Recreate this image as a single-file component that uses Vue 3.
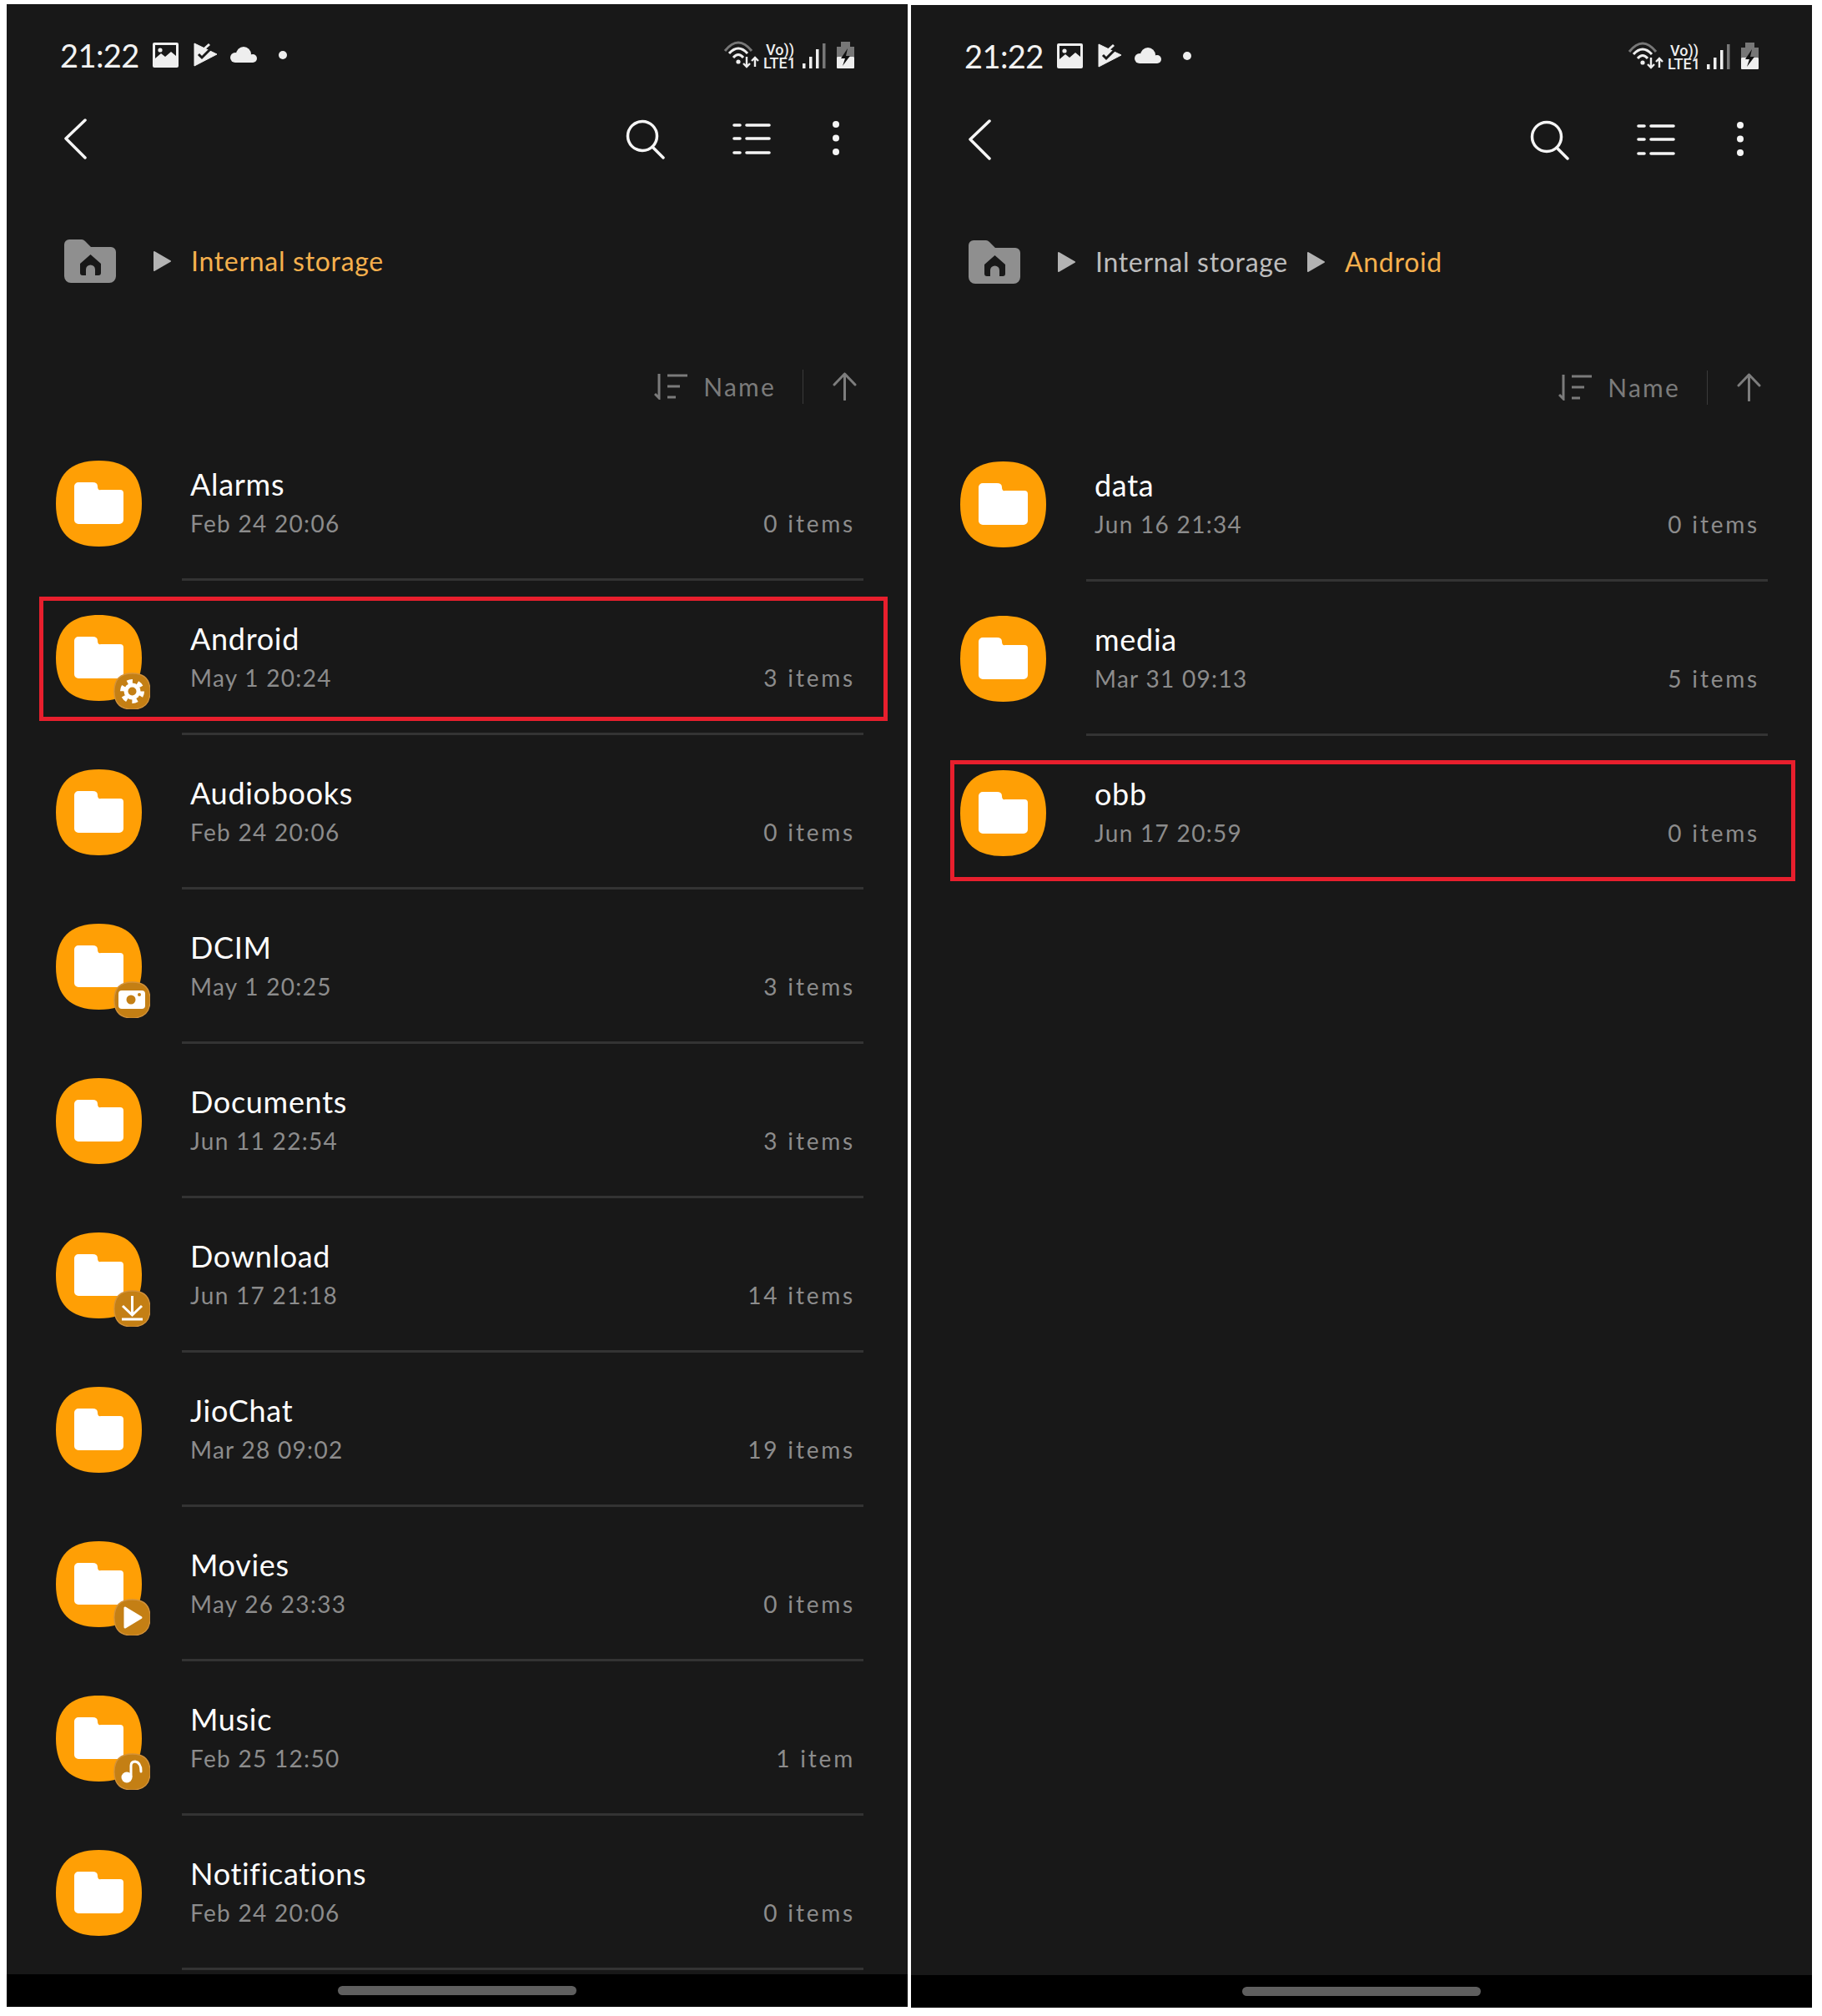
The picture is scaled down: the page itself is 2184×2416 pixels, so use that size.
<template>
  <div class="page">
    <section v-for="panel in panels" :key="panel.id" class="phone">
      <!-- Status bar -->
      <div class="status">
        <span class="status__time">21:22</span>
        <svg class="status__left" width="161" height="32" viewBox="0 0 161 32">
          <rect x="0" y="1" width="31" height="30" rx="2" fill="#eee" />
          <rect x="3" y="4" width="25" height="20" fill="#181818" />
          <circle cx="9" cy="10" r="2.6" fill="#eee" />
          <path d="M3 24v-4l7-6 5 4 7-6 6 5v7z" fill="#eee" />
          <path d="M50 2v27l27-14z" fill="#eee" stroke="#eee" stroke-width="1" stroke-linejoin="round" />
          <path d="M55 15l4 4 12-12" fill="none" stroke="#181818" stroke-width="3" />
          <path d="M59 11l9-8" fill="none" stroke="#eee" stroke-width="3" />
          <circle cx="99" cy="19" r="6" fill="#eee" />
          <circle cx="109" cy="15" r="9" fill="#eee" />
          <circle cx="120" cy="20" r="5" fill="#eee" />
          <rect x="99" y="19" width="21" height="6" fill="#eee" />
          <circle cx="156" cy="16" r="5" fill="#eee" />
        </svg>
        <svg class="status__right" width="157" height="46" viewBox="0 -6 157 46">
          <path d="M2 12Q18-8 34 12" fill="none" stroke="#777" stroke-width="3" />
          <path d="M7 15Q18 3 29 15" fill="none" stroke="#eee" stroke-width="3" />
          <path d="M12 20Q18 13 24 20" fill="none" stroke="#eee" stroke-width="3" />
          <circle cx="18" cy="25" r="2.6" fill="#eee" />
          <path d="M28 19v12M24 27l4 4 4-4M38 31V21M34 24l4-4 4 4" fill="none" stroke="#eee" stroke-width="2.4" />
          <text x="51" y="17" class="status__net">Vo))</text>
          <text x="48" y="33" class="status__net">LTE1</text>
          <rect x="95" y="27" width="3.5" height="6" fill="#eee" />
          <rect x="103" y="19" width="3.5" height="14" fill="#eee" />
          <rect x="111" y="10" width="3.5" height="23" fill="#eee" />
          <rect x="119" y="3" width="3.5" height="30" fill="#777" />
          <path d="M141 1h11v6h5v12h-21V7h5z" fill="#777" />
          <rect x="136" y="19" width="21" height="14" rx="1" fill="#eee" />
          <path d="M149 9l-8 12h5l-3 9 9-12h-5z" fill="#111" />
        </svg>
      </div>

      <!-- Toolbar -->
      <div class="toolbar">
        <svg class="toolbar__back" width="30" height="50" viewBox="0 0 30 50">
          <path d="M27 3L4 25l23 23" fill="none" stroke="#f5f5f5" stroke-width="3.5" stroke-linecap="round" stroke-linejoin="round" />
        </svg>
        <svg class="toolbar__search" width="48" height="48" viewBox="0 0 48 48">
          <circle cx="20" cy="20" r="17.5" fill="none" stroke="#f5f5f5" stroke-width="3.5" />
          <path d="M32 33l13 13" stroke="#f5f5f5" stroke-width="3.5" stroke-linecap="round" />
        </svg>
        <svg class="toolbar__list" width="48" height="40" viewBox="0 0 48 40">
          <path d="M3 4h7M3 20h7M3 37h7M18 4h27M18 20h27M18 37h27" stroke="#f5f5f5" stroke-width="3.6" stroke-linecap="round" />
        </svg>
        <svg class="toolbar__more" width="12" height="44" viewBox="0 0 12 44">
          <circle cx="6" cy="5" r="4" fill="#f5f5f5" />
          <circle cx="6" cy="21.500" r="4" fill="#f5f5f5" />
          <circle cx="6" cy="38" r="4" fill="#f5f5f5" />
        </svg>
      </div>

      <!-- Breadcrumb -->
      <div class="crumbs">
        <svg class="crumbs__home" width="62" height="52" viewBox="0 0 62 52">
          <path d="M6 0h15q2 0 4 2l7 7h24a6 6 0 0 1 6 6v29a8 8 0 0 1-8 8H8a8 8 0 0 1-8-8V6a6 6 0 0 1 6-6z" fill="#8f8f8f" />
          <path d="M31.500 18L44 29v11a3 3 0 0 1-3 3h-4v-7a5.500 5.500 0 0 0-11 0v7h-4a3 3 0 0 1-3-3V29z" fill="#181818" />
        </svg>
        <template v-for="(crumb, index) in panel.crumbs" :key="crumb">
          <svg class="crumbs__arrow" width="23" height="26" viewBox="0 0 23 26">
            <path d="M2 2l19 11L2 24z" fill="#b3b3b3" stroke="#b3b3b3" stroke-width="2" stroke-linejoin="round" />
          </svg>
          <span class="crumbs__label" :class="{ 'crumbs__label--active': index === panel.crumbs.length - 1 }">{{ crumb }}</span>
        </template>
      </div>

      <!-- Sort -->
      <div class="sort">
        <svg width="41" height="32" viewBox="0 0 41 32">
          <path d="M6 1v29L1 25M16 3h24M16 16h15M16 29h10" fill="none" stroke="#7b7b7b" stroke-width="3" />
        </svg>
        <span class="sort__label">Name</span>
        <span class="sort__divider"></span>
        <svg width="29" height="34" viewBox="0 0 29 34">
          <path d="M14.500 33V2M2 15L14.500 2 27 15" fill="none" stroke="#7d7d7d" stroke-width="3" stroke-linecap="round" stroke-linejoin="round" />
        </svg>
      </div>

      <!-- Folders -->
      <ul class="list">
        <li v-for="folder in panel.folders" :key="folder.name" class="row">
          <div v-if="folder.marked" class="row__mark" :class="'row__mark--' + panel.id"></div>
          <svg class="row__icon" width="113" height="113" viewBox="0 0 113 113">
            <path :d="squircle" fill="#ff9f05" />
            <path d="M27 26h17q6 0 6 5t4 4h23a4 4 0 0 1 4 4v32a5 5 0 0 1-5 5H27a5 5 0 0 1-5-5V31a5 5 0 0 1 5-5z" fill="#fff" />
            <g v-if="folder.badge">
              <path :d="squircle" transform="translate(70 70) scale(.4175)" fill="#c47f14" stroke="#d3923a" stroke-width="3" />
              <g v-if="folder.badge === 'gear'">
                <circle cx="91.500" cy="91.500" r="10" fill="#fff" />
                <circle cx="91.500" cy="91.500" r="12" fill="none" stroke="#fff" stroke-width="5" stroke-dasharray="6.300 6.270" />
                <circle cx="91.500" cy="91.500" r="5" fill="#c47f14" />
              </g>
              <g v-else-if="folder.badge === 'camera'">
                <rect x="75" y="80" width="32" height="22" rx="4" fill="#fff" />
                <circle cx="90" cy="91" r="5.500" fill="#c47f14" />
                <circle cx="100" cy="85" r="2" fill="#c47f14" />
              </g>
              <path v-else-if="folder.badge === 'download'" d="M91.500 76v22M80 88l11.500 11L103 88M79 104h25" fill="none" stroke="#fff" stroke-width="3" />
              <path v-else-if="folder.badge === 'play'" d="M83 80v23l19-11.500z" fill="#fff" stroke="#fff" stroke-width="3" stroke-linejoin="round" />
              <g v-else-if="folder.badge === 'music'">
                <circle cx="85" cy="98" r="6.500" fill="#fff" />
                <path d="M90 97V84q0-5 5-5 7 1 7 12" fill="none" stroke="#fff" stroke-width="3" stroke-linecap="round" />
              </g>
            </g>
          </svg>
          <div class="row__body" :class="{ 'row__body--end': folder.end }">
            <div class="row__name">{{ folder.name }}</div>
            <div class="row__meta">
              <span>{{ folder.date }}</span>
              <span class="row__count">{{ folder.count }}</span>
            </div>
          </div>
        </li>
      </ul>

      <!-- Navigation bar -->
      <div class="nav"><span class="nav__pill"></span></div>
    </section>
  </div>
</template>

<script setup>
const squircle =
  "M51.5 0C86 0 103 17 103 51.5 103 86 86 103 51.5 103 17 103 0 86 0 51.5 0 17 17 0 51.5 0z";

const panels = [
  {
    id: "root",
    crumbs: ["Internal storage"],
    folders: [
      { name: "Alarms", date: "Feb 24 20:06", count: "0 items" },
      { name: "Android", date: "May 1 20:24", count: "3 items", badge: "gear", marked: true },
      { name: "Audiobooks", date: "Feb 24 20:06", count: "0 items" },
      { name: "DCIM", date: "May 1 20:25", count: "3 items", badge: "camera" },
      { name: "Documents", date: "Jun 11 22:54", count: "3 items" },
      { name: "Download", date: "Jun 17 21:18", count: "14 items", badge: "download" },
      { name: "JioChat", date: "Mar 28 09:02", count: "19 items" },
      { name: "Movies", date: "May 26 23:33", count: "0 items", badge: "play" },
      { name: "Music", date: "Feb 25 12:50", count: "1 item", badge: "music" },
      { name: "Notifications", date: "Feb 24 20:06", count: "0 items" },
    ],
  },
  {
    id: "android",
    crumbs: ["Internal storage", "Android"],
    folders: [
      { name: "data", date: "Jun 16 21:34", count: "0 items" },
      { name: "media", date: "Mar 31 09:13", count: "5 items" },
      { name: "obb", date: "Jun 17 20:59", count: "0 items", marked: true, end: true },
    ],
  },
];
</script>

<style scoped>
.page {
  display: flex;
  gap: 4px;
  padding: 5px 12px 0 8px;
  font-family: Lato, "Open Sans", sans-serif;
}

.phone {
  display: flex;
  flex-direction: column;
  width: 1080px;
  height: 2400px;
  flex: none;
  background: #181818;
}

.phone + .phone {
  margin-top: 1px;
}

/* Status bar */
.status {
  display: flex;
  align-items: center;
  height: 122px;
  padding: 0 64px;
  box-sizing: border-box;
}

.status__time {
  width: 111px;
  color: #f2f2f2;
  font-size: 38px;
  letter-spacing: -0.6px;
}

.status__right {
  margin-left: auto;
}

.status__net {
  fill: #eee;
  font-family: Roboto, sans-serif;
  font-size: 18px;
  font-weight: 500;
}

/* Toolbar */
.toolbar {
  display: flex;
  align-items: center;
  height: 78px;
  padding: 0 80px 0 67px;
}

.toolbar__search {
  margin-left: auto;
  margin-top: 1px;
}

.toolbar__list {
  margin-left: 79px;
}

.toolbar__more {
  margin-left: 71px;
}

/* Breadcrumb */
.crumbs {
  display: flex;
  align-items: center;
  height: 100px;
  margin-top: 58px;
  padding-left: 69px;
}

.crumbs__home {
  margin-right: 44px;
}

.crumbs__arrow {
  margin-right: 23px;
}

.crumbs__label {
  margin: -2px 22px 0 0;
  color: #bdbdbd;
  font-size: 32px;
  letter-spacing: 0.7px;
}

.crumbs__label--active {
  color: #f5b04d;
}

/* Sort */
.sort {
  display: flex;
  align-items: center;
  justify-content: flex-end;
  height: 80px;
  margin-top: 60px;
  padding-right: 61px;
}

.sort__label {
  margin-left: 18px;
  color: #7b7b7b;
  font-size: 30px;
  letter-spacing: 2.2px;
}

.sort__divider {
  width: 1px;
  height: 41px;
  margin: 0 35px 0 32px;
  background: #3a3a3a;
}

/* Folders */
.list {
  flex: 1;
  margin: 7px 0 0;
  padding: 0;
  list-style: none;
}

.row {
  position: relative;
  display: flex;
  height: 185px;
  padding-left: 59px;
}

.row__mark {
  position: absolute;
  box-sizing: border-box;
  border: 5px solid #e81f2d;
}

.row__mark--root {
  top: 20px;
  left: 39px;
  width: 1017px;
  height: 149px;
}

.row__mark--android {
  top: 30px;
  left: 47px;
  width: 1013px;
  height: 145px;
}

.row__icon {
  flex: none;
  margin: 42px 38px 0 0;
}

.row__body {
  flex: 1;
  margin: 0 53px -1px 0;
  padding: 48px 10px 0;
  border-bottom: 3px solid #333;
}

.row__body--end {
  border-bottom: 0;
}

.row__name {
  margin-bottom: 3px;
  color: #fff;
  font-size: 36px;
  line-height: 44px;
  letter-spacing: 0.7px;
}

.row__meta {
  display: flex;
  justify-content: space-between;
  color: #8c8c8c;
  font-size: 28px;
  line-height: 44px;
  letter-spacing: 1.3px;
}

.row__count {
  letter-spacing: 2.8px;
}

/* Navigation bar */
.nav {
  display: flex;
  align-items: center;
  justify-content: center;
  height: 39px;
  background: #000;
}

.nav__pill {
  width: 286px;
  height: 11px;
  border-radius: 6px;
  background: #5f5f5f;
}
</style>
